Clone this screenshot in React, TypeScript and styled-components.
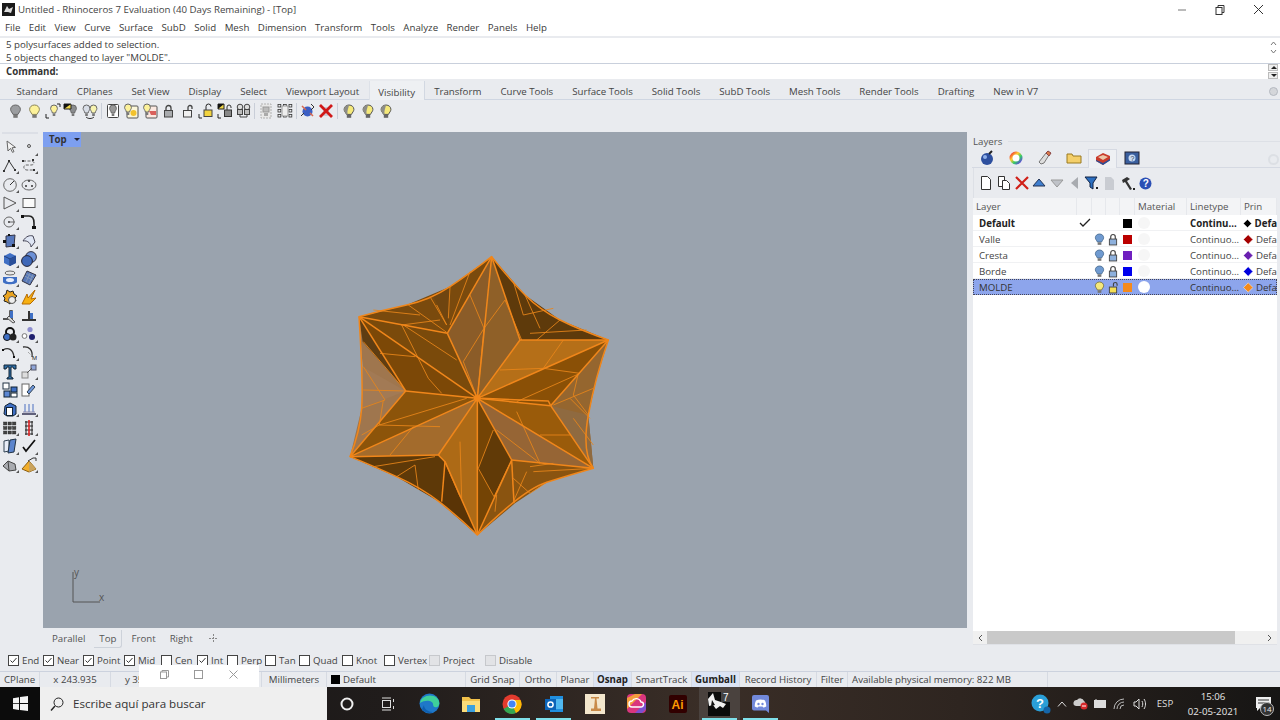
import React from "react";
import styled, { createGlobalStyle } from "styled-components";

const Global = createGlobalStyle`
  html, body { margin: 0; padding: 0; background: #e9ebef; }
  body { font-family: "Open Sans", "Liberation Sans", sans-serif; font-size: 9.7px; color: #333; }
  * { box-sizing: border-box; }
`;

const Page = styled.div`width: 1280px; height: 720px; overflow: hidden; position: relative; display: flex; flex-direction: column; background: #e9ebef;`;
const TitleBar = styled.div`height: 19px; background: #fff; display: flex; align-items: center; padding-left: 2px; flex: none;`;
const TitleText = styled.span`margin-left: 3px; color: #444; white-space: nowrap;`;
const WinButtons = styled.div`margin-left: auto; display: flex; align-items: center; padding-right: 16px; gap: 28px;`;
const MenuBar = styled.div`height: 17px; background: #fff; display: flex; align-items: center; padding-left: 5px; gap: 8.5px; flex: none; color: #3a3a3a;`;
const History = styled.div`height: 26px; margin-top: 2px; background: #fff; display: flex; justify-content: space-between; border-bottom: 1px solid #c9d0dc; flex: none; padding-left: 6px; line-height: 13px; color: #3c3c3c;`;
const HistoryScroll = styled.div`width: 14px; display: flex; flex-direction: column; align-items: center; gap: 3px; color: #666; padding-top: 3px;`;
const CommandLine = styled.div`height: 15px; background: #fff; display: flex; justify-content: space-between; align-items: center; padding-left: 6px; flex: none; font-weight: 700; color: #333;`;
const Spin = styled.div`width: 14px; display: flex; flex-direction: column; gap: 1px; padding: 0 2px;`;
const SpinBtn = styled.div<{ $up?: boolean }>`height: 7px; background: #eee; border: 1px solid #bbb; position: relative;
  &::after { content: ""; position: absolute; left: 2px; top: 1px; border-left: 3px solid transparent; border-right: 3px solid transparent;
    ${p => (p.$up ? "border-bottom: 3px solid #222;" : "border-top: 3px solid #222;")} }`;
const TabBar = styled.div`height: 19px; margin-top: 2px; display: flex; align-items: flex-end; padding-left: 7px; border-bottom: 1px solid #cfd6e2; flex: none; position: relative;`;
const TopTab = styled.div<{ $active?: boolean }>`height: 18px; line-height: 22px; padding: 0 9.5px; white-space: nowrap; color: #444;
  ${p => p.$active ? "background:#eef0f3; border-left:1px solid #dde1e8; border-right:1px solid #d2d8e2; margin-bottom:-1px; height:19px; line-height:24px; padding:0 8.5px;" : ""}`;
const Gear = styled.div`position: absolute; right: 2px; top: 6px; width: 9px; height: 9px; border-radius: 50%; background: #d4d6da; border: 1px solid #b4b8c0;`;
const ToolRow = styled.div`height: 22px; display: flex; align-items: center; padding-left: 6px; flex: none;`;
const ToolSlot = styled.div`width: 18.7px; height: 18px; display: flex; align-items: center; justify-content: center;`;
const ToolSep = styled.div`width: 1px; height: 16px; background: #c9ced8; margin: 0 1.5px;`;
const Middle = styled.div`display: flex; height: 528px; flex: none;`;
const LeftBar = styled.div`width: 43px; padding: 10px 0 0 0; flex: none; display: flex; flex-direction: column;`;
const Handle = styled.div`height: 2px; width: 36px; margin: 0 0 4px 2px; background: #dcdfe6;`;
const LeftGrid = styled.div`display: grid; grid-template-columns: 19px 19px; grid-auto-rows: 18.7px;`;
const Cell = styled.div<{ $flyout?: boolean }>`position: relative; display: flex; align-items: center; justify-content: center;
  ${p => p.$flyout ? `&::after { content:""; position:absolute; right:0; bottom:1px; border-left:3px solid transparent; border-bottom:3px solid #555; }` : ""}`;
const ViewColumn = styled.div`width: 924px; flex: none; display: flex; flex-direction: column; padding-top: 10px;`;
const Viewport = styled.div`position: relative; height: 496px; background: #9aa3ae; flex: none;`;
const ViewLabel = styled.div`position: absolute; left: 0; top: 0; width: 38px; height: 15px; background: #7d9ff0; display: flex; align-items: center; padding-left: 6px; font-weight: 700; color: #333; gap: 7px;`;
const Caret = styled.span`border-left: 3px solid transparent; border-right: 3px solid transparent; border-top: 3px solid #223;`;
const StarWrap = styled.svg`position: absolute; left: 297px; top: 113px; width: 280px; height: 300px;`;
const Axis = styled.svg`position: absolute; left: 20px; top: 430px; width: 50px; height: 48px;`;
const AxisText = styled.span<{ $x: number; $y: number }>`position: absolute; left: ${p => p.$x}px; top: ${p => p.$y}px; color: #555; font-size: 10px;`;
const RightPanel = styled.div`width: 313px; flex: none; display: flex; flex-direction: column; padding: 12px 0 0 6px; position: relative;`;
const PanelTitle = styled.div`display: flex; align-items: center; gap: 6px; height: 14px; color: #555; flex: none; &::after { content: ""; flex: 1; height: 1px; background: #dde0e6; }`;
const PanelTabs = styled.div`height: 20px; flex: none; display: flex; align-items: flex-end; border-bottom: 1px solid #d5d9e2; position: relative; margin-left: -1px;`;
const PanelTab = styled.div<{ $active?: boolean }>`width: 29px; height: 17px; padding-bottom: 1px; display: flex; align-items: center; justify-content: center;
  ${p => p.$active ? "background:#eef0f3; border:1px solid #d5d9e2; border-bottom:none; height:19px; margin-bottom:-1px; padding-bottom:0;" : ""}`;
const PanelGear = styled.div`position: absolute; right: 1px; top: 6px; width: 11px; height: 11px; border-radius: 50%; border: 2px solid #dcdfe4;`;
const LayerTools = styled.div`height: 30px; flex: none; display: flex; align-items: center; padding-left: 4px; gap: 1px; border-left: 1px solid #dde0e6;`;
const LayerTool = styled.div`width: 16.7px; height: 18px; display: flex; align-items: center; justify-content: center;`;
const Table = styled.div`background: #fff; height: 433px; width: 304px; position: relative; flex: none;`;
const Header = styled.div`display: grid; grid-template-columns: 104px 15px 14px 14px 15px 52px 54px 36px; height: 17px; background: #f3f4f6; color: #555; overflow: hidden;`;
const HeadCell = styled.div`padding-left: 3px; line-height: 17px; border-right: 1px solid #e6e8ec; white-space: nowrap; overflow: hidden;`;
const Row = styled.div<{ $sel?: boolean; $bold?: boolean }>`display: grid; grid-template-columns: 104px 15px 14px 14px 15px 52px 54px 36px; height: 16px; align-items: center; overflow: hidden;
  color: #444; box-shadow: inset 0 -1px #f0f1f3;
  ${p => p.$bold ? "font-weight:700; color:#222;" : ""}
  ${p => p.$sel ? "background:#8da5ec; outline:1px dotted #445; outline-offset:-1px; box-shadow:none; color:#333;" : ""}`;
const RCell = styled.div<{ $pad?: number }>`padding-left: ${p => p.$pad ?? 0}px; white-space: nowrap; overflow: hidden; display: flex; align-items: center; justify-content: ${p => p.$pad === undefined ? "center" : "flex-start"};`;
const Swatch = styled.div<{ $c: string }>`width: 9px; height: 9px; background: ${p => p.$c}; flex: none;`;
const Mat = styled.div<{ $c: string }>`width: 12px; height: 12px; border-radius: 50%; background: ${p => p.$c}; margin-left: 1px;`;
const HScroll = styled.div`height: 14px; width: 304px; flex: none; background: #f0f0f0; display: flex; align-items: center; color: #555; border-bottom: 1px solid #dfe1e6;`;
const Arrow = styled.div`width: 14px; flex: none; display: flex; justify-content: center;`;
const Thumb = styled.div`width: 248px; height: 13px; background: #c9c9c9; flex: none;`;
const ThumbRest = styled.div`flex: 1;`;
const ViewTabs = styled.div`height: 22px; display: flex; align-items: center; padding: 0 0 1px 4px; flex: none; color: #555;`;
const ViewTab = styled.div<{ $active?: boolean }>`padding: 0 5px; margin-right: 4px; height: 18px; line-height: 18px;
  ${p => p.$active ? "border-right:1px solid #cdd2da; border-bottom:1px solid #cdd2da; border-radius:0 0 3px 0;" : ""}`;
const AddView = styled.svg`margin-left: 7px;`;
const Osnap = styled.div`height: 22px; display: flex; align-items: center; padding-left: 8px; flex: none; border-bottom: 1px solid #ccd2de; color: #444;`;
const SnapItem = styled.div<{ $w: number }>`width: ${p => p.$w}px; display: flex; align-items: center; gap: 3px; white-space: nowrap; flex: none;`;
const Box = styled.div<{ $dis?: boolean }>`width: 11px; height: 11px; border: 1px solid ${p => p.$dis ? "#c6c8cc" : "#444"}; background: ${p => p.$dis ? "#e2e3e6" : "#fff"}; display: flex; align-items: center; justify-content: center; flex: none;`;
const Status = styled.div`height: 15px; display: flex; align-items: center; flex: none; color: #444; overflow: hidden;`;
const StatCell = styled.div<{ $w: number; $on?: boolean; $center?: boolean }>`width: ${p => p.$w}px; height: 15px; line-height: 15px; flex: none; white-space: nowrap; border-right: 1px solid #d6dae2; padding-left: ${p => p.$center ? 0 : 4}px; text-align: ${p => p.$center ? "center" : "left"};
  ${p => p.$on ? "background:#dce4f4; font-weight:700; color:#222;" : ""}`;
const DefaultCell = styled(StatCell)`display: flex; align-items: center; gap: 3px;`;
const Floating = styled.div`position: absolute; left: 139px; top: 665px; width: 120px; height: 22px; background: #fff; display: flex; align-items: center; justify-content: space-around; padding: 0 8px 4px;`;
const Taskbar = styled.div`height: 33px; flex: none; display: flex; align-items: center; background: linear-gradient(90deg,#141414 0%,#201c1b 30%,#3a2e27 55%,#2e2520 75%,#161514 100%); color: #e8e8e8;`;
const StartBtn = styled.div`width: 40px; height: 33px; display: flex; align-items: center; justify-content: center; background: #0c0c0c;`;
const Search = styled.div`width: 287px; height: 33px; background: #efefef; display: flex; align-items: center; padding-left: 10px; gap: 9px; color: #333; font-size: 11.6px;`;
const TaskApps = styled.div`display: flex; align-items: center; height: 33px; margin-left: -1px;`;
const TaskApp = styled.div<{ $run?: boolean; $active?: boolean }>`width: 41.4px; height: 33px; display: flex; align-items: center; justify-content: center; position: relative;
  ${p => p.$active ? "background:#4a423e;" : ""}
  ${p => p.$run ? `&::after{content:"";position:absolute;left:3px;right:3px;bottom:0;height:2px;background:#7fe0ea;}` : ""}`;
const Tray = styled.div`margin-left: auto; display: flex; align-items: center; height: 33px;`;
const TrayItem = styled.div<{ $w: number }>`width: ${p => p.$w}px; display: flex; align-items: center; justify-content: center; color: #ddd; font-size: 9.7px;`;
const Clock = styled.div`width: 66px; text-align: center; line-height: 15px; font-size: 9.7px; color: #e8e8e8;`;
const Notif = styled.div`width: 34px; display: flex; justify-content: center; position: relative;`;
const NotifBadge = styled.span`position: absolute; right: 6px; top: 5px; width: 14px; height: 14px; border-radius: 50%; border: 1px solid #bbb; background: #333; color: #eee; font-size: 8px; line-height: 12px; text-align: center;`;

const BULB = "M6.5 1C3.6 1 1.6 3 1.6 5.4c0 2 1.6 3 2.4 5h5c.8-2 2.4-3 2.4-5C11.4 3 9.4 1 6.5 1z";
const Bulb = ({ c = "#fff59a", s = "#777", w = 13, h = 15 }: { c?: string; s?: string; w?: number; h?: number }) => (
  <svg width={w} height={h} viewBox="0 0 13 15">
    <path d={BULB} fill={c} stroke={s} />
    <rect x="4.3" y="10.8" width="4.4" height="3" fill="#777" />
  </svg>
);
const HalfBulb = () => (
  <svg width="16" height="15" viewBox="0 0 13 15">
    <path d={BULB} fill="#f5e97a" stroke="#555" />
    <path d="M6.5 1C3.6 1 1.6 3 1.6 5.4c0 2 1.6 3 2.4 5h1.500C4 8 6 4 6.500 1z" fill="#8d8d88" />
    <rect x="4.3" y="10.8" width="4.4" height="3" fill="#666" />
  </svg>
);
const Lock = ({ c = "#eee", open, w = 11, h = 14 }: { c?: string; open?: boolean; w?: number; h?: number }) => (
  <svg width={w} height={h} viewBox="0 0 11 14">
    <path d={open ? "M6 6V3.5a2 2 0 0 1 4 0V5" : "M3 7V4a2.5 2.5 0 0 1 5 0v3"} fill="none" stroke="#444" strokeWidth="1.3" />
    <rect x="1.5" y="6.5" width="8" height="6.5" fill={c} stroke="#444" />
  </svg>
);
const I = ({ children, w = 16, h = 16 }: { children: React.ReactNode; w?: number; h?: number }) => <svg width={w} height={h} viewBox="0 0 16 16">{children}</svg>;
const MiniBulb = ({ x, c, y = 0 }: { x: number; c: string; y?: number }) => <g transform={`translate(0 ${y})`}><path d={`M${x} 2a3.4 3.4 0 0 0-3.4 3.4c0 1.6 1.3 2.4 1.8 4.6h3.2c.5-2.2 1.8-3 1.8-4.6A3.4 3.4 0 0 0 ${x} 2z`} fill={c} stroke="#666" /><rect x={x - 1.3} y="10.5" width="2.6" height="2.5" fill="#777" /></g>;

const topIcons: (React.ReactNode | "sep")[] = [
  <Bulb c="#9b9da0" s="#666" />,
  <Bulb c="#fdf29a" s="#8a8458" />,
  <I><MiniBulb x={9} c="#fdf29a" /><path d="M1 11v4h3M12 1h3v3" fill="none" stroke="#222" /></I>,
  <I><MiniBulb x={10} c="#8a8c8e" /><path d="M1 1h7v5H1z" fill="#f1d84a" stroke="#222" /><path d="M1 1h7L1 6z" fill="#111" /></I>,
  <I><MiniBulb x={4.5} c="#d8dde6" /><MiniBulb x={11.5} c="#f8f4b0" /><path d="M4 14c2 2 6 2 8 0" fill="none" stroke="#333" /></I>,
  "sep",
  <I><rect x="2.5" y="1.5" width="11" height="13" rx="1" fill="#fff" stroke="#444" /><MiniBulb x={8} c="#999" /></I>,
  <I><rect x="4" y="3" width="11" height="12" rx="1" fill="#fbf6d8" stroke="#555" /><MiniBulb x={5} c="#fdf29a" y={-1} /><circle cx="10.5" cy="10" r="3" fill="#f3c22c" /></I>,
  <I><rect x="4" y="3" width="11" height="12" rx="1" fill="#fbe8e0" stroke="#555" /><MiniBulb x={5} c="#fdf29a" y={-1} /><path d="M7 8h7v4H9z" fill="#d9605c" /></I>,
  <Lock c="#a9abae" />,
  <Lock c="#f0f0f0" open />,
  <I><path d="M8 7V3.5a2.5 2.5 0 0 1 5 0" fill="none" stroke="#222" /><rect x="6" y="7" width="8" height="6.5" fill="#f2d33f" stroke="#444" /><path d="M1 11v4h3" fill="none" stroke="#222" /></I>,
  <I><path d="M1 1h6v5H1z" fill="#f1d84a" stroke="#222" /><path d="M1 1h6L1 6z" fill="#111" /><path d="M10 7V4a2 2 0 0 1 4 0v1" fill="none" stroke="#333" /><rect x="7.5" y="7" width="7" height="6.5" fill="#888" stroke="#333" /><path d="M1 11v4h3" fill="none" stroke="#222" /></I>,
  <I><g transform="translate(-.5 0)"><circle cx="4.5" cy="4" r="2.8" fill="#ddd" stroke="#444" /><rect x="2" y="6.5" width="5" height="5" fill="#bbb" stroke="#444" /><circle cx="11.5" cy="4" r="2.8" fill="#ddd" stroke="#444" /><rect x="9" y="6.5" width="5" height="5" fill="#bbb" stroke="#444" /><path d="M4.5 12v2h7v-2" fill="none" stroke="#444" /></g></I>,
  "sep",
  <I><rect x="3" y="1" width="10" height="14" fill="#e8e8e8" stroke="#b0b0b0" strokeDasharray="2 1" /><rect x="5" y="4" width="6" height="5" fill="#bbb" stroke="#999" /><rect x="6" y="10" width="4" height="3" fill="#aaa" /></I>,
  <I><g fill="#333">{[1.5, 6.5, 11.5].flatMap(y => [1, 6.5, 12].map(x => <rect key={x + "-" + y} x={x} y={y} width="2.8" height="2.5" fill="none" stroke="#333" strokeWidth=".8" />))}</g><rect x="5" y="3" width="6" height="10" fill="#eee" stroke="#999" /></I>,
  "sep",
  <I><circle cx="7.5" cy="8.5" r="5" fill="#3c5fc4" /><path d="M2 3l4 4M13 13l-3-3" stroke="#d8684f" strokeWidth="1.5" /><path d="M11 1l3 3-3 3" fill="none" stroke="#333" /><path d="M1 13l3-3" stroke="#333" /></I>,
  <I><rect x="5" y="4" width="6" height="9" rx="2" fill="#c8ccd8" /><path d="M2 2l12 12M14 2L2 14" stroke="#d01818" strokeWidth="2.8" /></I>,
  "sep",
  <HalfBulb />,
  <HalfBulb />,
  <HalfBulb />,
];

const p = { dot: "#333" };
const leftIcons: { n: React.ReactNode; f?: boolean }[] = [
  { n: <I><path d="M5 2l1 10 2.5-2.6 2 4 1.5-.8-2-3.8 3.500-.4z" fill="#f4f4f4" stroke="#666" /></I> },
  { n: <I><circle cx="8" cy="7" r="1.500" fill="#ddd" stroke="#555" /></I>, f: true },
  { n: <I><path d="M2 13L7 3l6 9" fill="none" stroke="#333" /><g fill={p.dot}><rect x="1" y="12" width="2" height="2" /><rect x="6" y="2" width="2" height="2" /><rect x="12" y="11" width="2" height="2" /></g></I>, f: true },
  { n: <I><path d="M2 3h8c4 0 4 4 0 4H5c-3 0-3 5 1 5h8" fill="none" stroke="#666" strokeDasharray="3 1.5" /><g fill={p.dot}><rect x="1" y="2" width="2" height="2" /><rect x="11" y="1" width="2" height="2" /><rect x="12" y="11" width="2" height="2" /></g></I>, f: true },
  { n: <I><circle cx="8" cy="8" r="6.3" fill="none" stroke="#666" /><path d="M8 8l4-4" stroke="#333" /></I>, f: true },
  { n: <I><ellipse cx="8" cy="8" rx="7" ry="5" fill="none" stroke="#666" /><circle cx="8" cy="4" r="1" fill="#333" /><circle cx="5" cy="9" r="1" fill="#333" /><circle cx="11" cy="9" r="1" fill="#333" /></I> },
  { n: <I><path d="M2 2l12 6-12 6z" fill="none" stroke="#555" /></I>, f: true },
  { n: <I><rect x="2" y="3.5" width="12" height="9" fill="#fafafa" stroke="#555" /></I> },
  { n: <I><circle cx="7" cy="8" r="5" fill="none" stroke="#666" /><circle cx="7" cy="8" r="1" fill="#333" /><path d="M7 8h6" stroke="#666" /></I>, f: true },
  { n: <I><path d="M1 2h7c4 0 5 3 5 7v4" fill="none" stroke="#222" strokeWidth="1.6" /><rect x="0" y="1" width="3" height="3" fill="#111" /><rect x="11" y="12" width="4" height="3" fill="#111" /></I> },
  { n: <I><path d="M4 3l9-1-1 11-8 1z" fill="#5778bb" stroke="#334" /><g fill="#111"><rect x="1" y="7" width="3" height="3" /><rect x="6" y="1" width="2" height="2" /><rect x="10" y="11" width="3" height="3" /></g></I>, f: true },
  { n: <I><path d="M2 8c3-5 7-6 10-5l2 6-4 5c0-3-3-7-8-6z" fill="#dfe6f4" stroke="#445" /></I>, f: true },
  { n: <I><path d="M8 2l6 3v7l-6 3-6-3V5z" fill="#3f6fc4" /><path d="M2 5l6 3 6-3M8 8v7" stroke="#213f7c" fill="none" /><path d="M8 8l6-3v7l-6 3z" fill="#2a4f99" /></I>, f: true },
  { n: <I><circle cx="10" cy="6" r="5.4" fill="#6c90d6" stroke="#334" /><circle cx="6" cy="10" r="5.4" fill="#3f68b8" stroke="#223" /></I>, f: true },
  { n: <I><ellipse cx="8" cy="3" rx="5" ry="2" fill="#e8e8e8" stroke="#666" /><path d="M1 7h14v5c-1 3-13 3-14 0z" fill="#3f6fc4" /><ellipse cx="8" cy="10" rx="4" ry="2" fill="#e8eefc" /></I>, f: true },
  { n: <I><path d="M6 1l9 4-6 10-8-4z" fill="#5878b8" stroke="#334" /><path d="M3.5 6l8 4M5 3.5l8 4M9 3L5 12M12 4l-4 10" stroke="#9ab" strokeWidth=".6" /></I>, f: true },
  { n: <I><path d="M5 1l3 2 3-1 1 3 3 2-2 2 1 3-4 0-2 3-3-2-3-1 1-3-2-2 3-2z" fill="#e9a321" stroke="#222" /><circle cx="10" cy="11" r="3.5" fill="#eee" stroke="#555" /></I> },
  { n: <I><path d="M1 15L6 5l1 4 7-8-4 9 5-1-6 6z" fill="#f7b012" stroke="#b56a00" /></I> },
  { n: <I><path d="M1 11h7V3h2v8" fill="none" stroke="#222" strokeWidth="1.4" /><path d="M7 8l6 6-2 1-6-5z" fill="#d8d8d8" stroke="#555" /><rect x="8" y="3" width="3" height="7" fill="#3f6fc4" /></I> },
  { n: <I><path d="M1 13h14v-2H9V3H7v8H1z" fill="#333" /><path d="M9 5h3v6H9z" fill="#3f6fc4" /></I> },
  { n: <I><circle cx="8" cy="6" r="4" fill="none" stroke="#111" strokeWidth="2" /><circle cx="5" cy="11" r="3.5" fill="#3f6fc4" stroke="#111" /><circle cx="11" cy="11" r="3.5" fill="#222" /></I>, f: true },
  { n: <I><circle cx="9" cy="3.5" r="2.6" fill="#8f8fd0" /><circle cx="3.5" cy="10" r="2.4" fill="#fff" stroke="#777" /><circle cx="11" cy="11" r="3" fill="#20206e" /></I>, f: true },
  { n: <I><path d="M1 5c5-3 10-1 11 7" fill="none" stroke="#333" strokeWidth="1.3" /><rect x="0" y="4" width="2" height="2" fill="#111" /><rect x="11" y="11" width="2" height="2" fill="#111" /></I>, f: true },
  { n: <I><path d="M2 2c6-1 10 3 9 10" fill="none" stroke="#333" strokeWidth="1.3" /><path d="M7 7l3 3" stroke="#888" strokeDasharray="1 1" /><text x="11" y="15" fontSize="6" fontFamily="Liberation Sans" fill="#222">M</text></I> },
  { n: <I><path d="M2 1h12v4h-2l-1-2H9v10l2 1v1H5v-1l2-1V3H5L4 5H2z" fill="#2f6fa8" stroke="#123" /></I> },
  { n: <I><rect x="1" y="8" width="6" height="6" fill="#ddd" stroke="#888" /><rect x="10" y="1" width="5" height="5" fill="#8fa5d8" stroke="#556" /><path d="M6 9l5-5" stroke="#555" /></I>, f: true },
  { n: <I><rect x="1" y="1" width="6" height="6" fill="#fff" stroke="#234" /><rect x="9" y="5" width="6" height="5" fill="#3f6fc4" stroke="#123" /><rect x="2" y="9" width="6" height="6" fill="#5b86d2" stroke="#123" /><rect x="9" y="11" width="6" height="4" fill="#fff" stroke="#123" /></I> },
  { n: <I><rect x="1" y="2" width="7" height="12" fill="#fff" stroke="#666" /><path d="M8 12l6-7-2-2-6 7z" fill="#6f97dc" stroke="#345" /></I> },
  { n: <I><path d="M3 5l5-3 6 3v8l-3 2H5l-3-2z" fill="#3f6fc4" stroke="#123" /><rect x="4.5" y="6.5" width="6" height="8" fill="#fff" stroke="#123" /></I>, f: true },
  { n: <I><path d="M1 13h14" stroke="#335" strokeWidth="1.5" /><path d="M4 3v8M8 3v8M12 3v8" stroke="#4a6fc0" /><path d="M2 11h12" stroke="#88a" /></I>, f: true },
  { n: <I><g fill="#444">{[2, 6.5, 11].flatMap(y => [1.5, 6, 10.5].map(x => <rect key={x + "_" + y} x={x} y={y} width="3.4" height="3" stroke="#222" strokeWidth=".4" />))}</g></I>, f: true },
  { n: <I><g stroke="#222" fill="none"><path d="M4 2h8M4 6h8M4 10h8M4 14h8M5 1v14M11 1v14" /></g><path d="M8 0v16" stroke="#d22" strokeWidth="1.6" /></I>, f: true },
  { n: <I><path d="M2 3l5-1v11l-5 1z" fill="#e8edf7" stroke="#345" /><path d="M8 2l6-1-2 13-6 1z" fill="#5c85cd" stroke="#234" /></I>, f: true },
  { n: <I><path d="M2 9l3 4 9-11" fill="none" stroke="#111" strokeWidth="1.7" /></I>, f: true },
  { n: <I><path d="M1 9l5-5 7 3 1 6-7 1z" fill="#a9abb0" stroke="#444" /><path d="M6 4l1 10" stroke="#444" /></I>, f: true },
  { n: <I><path d="M8 4L1 12l7 3 7-3z" fill="#f2ae2a" stroke="#8b5d10" /><path d="M8 4l7 8-7 3z" fill="#c9a35e" /><path d="M7 4l5-3h3v3" fill="none" stroke="#333" /></I>, f: true },
];

const Star = () => {
  const C = "412,460";
  const faces: [string, string][] = [
    [`${C} 322,265 455,35`, "#8b5c28"], [`${C} 455,35 540,285`, "#8f6028"],
    [`${C} 540,285 805,285`, "#b56f18"], [`${C} 805,285 632,482`, "#8a5006"],
    [`${C} 632,482 760,670`, "#9a5b0a"], [`${C} 760,670 515,645`, "#966535"],
    [`${C} 515,645 412,870`, "#744405"], [`${C} 412,870 315,650 295,630`, "#ad6a16"],
    [`${C} 295,630 30,635`, "#a36b2c"], [`${C} 30,635 197,438`, "#8c540a"],
    [`${C} 197,438 57,215`, "#7c4807"], [`${C} 57,215 322,265`, "#7a4a0b"],
    [`455,35 520,110 555,150 660,225 805,285 540,285`, "#5e3a0b"],
    [`805,285 770,400 745,510 760,670 632,482`, "#95662f"],
    [`760,670 620,712 525,775 412,870 515,645`, "#8a5410"],
    [`412,870 300,772 170,695 30,635 295,630 315,650`, "#5e3908"],
    [`30,635 65,490 68,365 57,215 197,438`, "#9f764e"],
    [`57,215 200,180 330,125 455,35 322,265`, "#7a4a0d"],
    [`57,215 197,438 68,290`, "#5f3d12"],
    [`68,365 197,438 65,490`, "#a27a55"],
    [`415,670 460,555 515,645 462,755`, "#613a07"],
    [`632,482 745,510 760,670`, "#8f6a40"],
    [`300,772 315,650 360,755 412,870`, "#5a3406"],
    [`720,385 805,285 632,482`, "#a5691d"],
    [`280,155 330,125 325,240`, "#6f4510"],
  ];
  const thick = ["412,460 322,265", "412,460 455,35", "412,460 540,285", "412,460 805,285", "412,460 632,482", "412,460 760,670", "412,460 515,645", "412,460 412,870", "412,460 295,630", "412,460 30,635", "412,460 197,438", "412,460 57,215",
    "322,265 455,35", "455,35 540,285", "540,285 805,285", "805,285 632,482", "632,482 760,670", "760,670 515,645", "515,645 412,870", "412,870 315,650 295,630", "295,630 30,635", "30,635 197,438", "197,438 57,215", "57,215 322,265",
    "425,460 625,468 632,482", "515,645 522,775", "315,650 305,770"];
  const thin = ["390,150 432,250 370,350 412,460", "495,165 432,250 412,460", "330,240 390,80", "330,125 325,220", "270,155 320,240 290,180", "205,180 320,262", "185,240 300,225", "100,195 240,210", "185,240 265,400 305,445", "70,290 197,438", "70,365 135,465 65,490", "70,435 197,438", "120,325 225,335", "190,240 350,345",
    "130,465 118,540 65,570", "118,540 300,545", "118,540 380,460", "220,545 150,630", "100,665 285,635", "170,695 225,660", "225,660 235,735", "360,755 315,650", "360,590 365,760", "415,670 462,755", "415,670 460,555", "462,755 515,645", "465,800 470,750", "520,770 560,680", "520,700 570,745 620,712", "580,680 760,670", "570,665 640,655", "470,555 600,655", "530,500 600,655", "600,570 690,570", "720,385 610,370 480,375", "670,285 610,370", "720,385 530,470", "760,430 640,480", "715,385 700,450 745,510", "690,460 750,520", "700,520 760,600", "555,150 600,250", "550,210 640,190", "520,110 550,210", "495,165 545,285", "660,225 590,285", "740,255 570,265"];
  return (
    <StarWrap viewBox="0 0 840 900">
      {faces.map(([pts, fill]) => <polygon key={pts} points={pts} fill={fill} />)}
      <g fill="none" stroke="#e8851a" strokeWidth="2.6">{thin.map(t => <polyline key={t} points={t} />)}</g>
      <g fill="none" stroke="#f0861a" strokeWidth="4.5" strokeLinejoin="round">
        {thick.map(t => <polyline key={t} points={t} />)}
        <path d="M455 35Q510 105 555 150T660 225 805 285Q765 400 745 510T760 670Q690 690 620 712T412 870Q355 815 300 772T170 695 30 635Q60 560 65 490T57 215Q130 195 200 180T330 125 455 35z" />
      </g>
      <circle cx="412" cy="460" r="10" fill="#f0861a" />
    </StarWrap>
  );
};

const Mini = () => <svg width="9" height="9" viewBox="0 0 9 9"><path d="M1.5 4.5l2 2 4-4.5" fill="none" stroke="#333" /></svg>;
const Diamond = ({ c }: { c: string }) => <svg width="11" height="11" viewBox="0 0 11 11"><path d="M5.5 0.5l5 5-5 5-5-5z" fill={c} stroke="#fff" strokeWidth=".5" /></svg>;

const topTabs = ["Standard", "CPlanes", "Set View", "Display", "Select", "Viewport Layout", "Visibility", "Transform", "Curve Tools", "Surface Tools", "Solid Tools", "SubD Tools", "Mesh Tools", "Render Tools", "Drafting", "New in V7"];
const menus = ["File", "Edit", "View", "Curve", "Surface", "SubD", "Solid", "Mesh", "Dimension", "Transform", "Tools", "Analyze", "Render", "Panels", "Help"];
const snaps: [string, number, boolean, boolean?][] = [["End", 35, true], ["Near", 40, true], ["Point", 41, true], ["Mid", 37, true], ["Cen", 36, false], ["Int", 30, true], ["Perp", 38, false], ["Tan", 34, false], ["Quad", 43, false], ["Knot", 42, false], ["Vertex", 45, false], ["Project", 56, false, true], ["Disable", 50, false, true]];
const rows = [
  { name: "Default", bold: true, c: "#000", d: "#000", check: true, lt: "Continu...", pr: "Defa" },
  { name: "Valle", c: "#bb0000", d: "#a50000", lt: "Continuo...", pr: "Defa" },
  { name: "Cresta", c: "#7020c0", d: "#6a20b0", lt: "Continuo...", pr: "Defa" },
  { name: "Borde", c: "#0000ee", d: "#0000dd", lt: "Continuo...", pr: "Defa" },
];

export default function App() {
  return (
    <Page>
      <Global />
      <TitleBar>
        <svg width="13" height="13" viewBox="0 0 13 13"><rect width="13" height="13" fill="#1a1a1a" /><path d="M2 9l3-6 2 3 4-2-2 6-3-1z" fill="#ddd" /></svg>
        <TitleText>Untitled - Rhinoceros 7 Evaluation (40 Days Remaining) - [Top]</TitleText>
        <WinButtons>
          <svg width="10" height="10" viewBox="0 0 10 10"><path d="M1 5h8" stroke="#777" /></svg>
          <svg width="10" height="10" viewBox="0 0 10 10"><rect x="1" y="2.5" width="6" height="7" fill="none" stroke="#333" /><path d="M3 2.5V.5h6v7H7" fill="none" stroke="#333" /></svg>
          <svg width="11" height="11" viewBox="0 0 11 11"><path d="M1 1l9 9M10 1l-9 9" stroke="#333" /></svg>
        </WinButtons>
      </TitleBar>
      <MenuBar>{menus.map(m => <span key={m}>{m}</span>)}</MenuBar>
      <History>
        <div>5 polysurfaces added to selection.<br />5 objects changed to layer "MOLDE".</div>
        <HistoryScroll>
          <svg width="7" height="5" viewBox="0 0 7 5"><path d="M1 4l2.5-3L6 4" fill="none" stroke="#777" /></svg>
          <svg width="7" height="5" viewBox="0 0 7 5"><path d="M1 1l2.5 3L6 1" fill="none" stroke="#777" /></svg>
        </HistoryScroll>
      </History>
      <CommandLine>
        <span>Command:</span>
        <Spin><SpinBtn $up /><SpinBtn /></Spin>
      </CommandLine>
      <TabBar>
        {topTabs.map(t => <TopTab key={t} $active={t === "Visibility"}>{t}</TopTab>)}
        <Gear />
      </TabBar>
      <ToolRow>
        {topIcons.map((n, i) => n === "sep" ? <ToolSep key={i} /> : <ToolSlot key={i}>{n}</ToolSlot>)}
      </ToolRow>
      <Middle>
        <LeftBar>
          <Handle />
          <LeftGrid>{leftIcons.map((c, i) => <Cell key={i} $flyout={c.f}>{c.n}</Cell>)}</LeftGrid>
        </LeftBar>
        <ViewColumn>
          <Viewport>
            <ViewLabel>Top<Caret /></ViewLabel>
            <Star />
            <Axis viewBox="0 0 50 48"><path d="M10 10v30h27" fill="none" stroke="#555" /></Axis>
            <AxisText $x={31} $y={433}>y</AxisText>
            <AxisText $x={56} $y={458}>x</AxisText>
          </Viewport>
          <ViewTabs>
            <ViewTab>Parallel</ViewTab>
            <ViewTab $active>Top</ViewTab>
            <ViewTab>Front</ViewTab>
            <ViewTab>Right</ViewTab>
            <AddView width="9" height="9" viewBox="0 0 9 9"><path d="M4.5 0v9M0 4.5h9" stroke="#888" strokeDasharray="2 1" /></AddView>
          </ViewTabs>
        </ViewColumn>
        <RightPanel>
          <PanelTitle>Layers</PanelTitle>
          <PanelTabs>
            <PanelTab><I><circle cx="8" cy="9" r="6" fill="#2d4f9e" /><circle cx="6" cy="7" r="2" fill="#8fb0ea" /><path d="M10 4l3-3" stroke="#222" strokeWidth="2" /></I></PanelTab>
            <PanelTab><svg width="14" height="14" viewBox="0 0 14 14"><defs><linearGradient id="rb" x1="0" y1="0" x2="1" y2="1"><stop offset="0" stopColor="#e33" /><stop offset=".35" stopColor="#fc3" /><stop offset=".65" stopColor="#3c6" /><stop offset="1" stopColor="#63e" /></linearGradient></defs><circle cx="7" cy="7" r="5" fill="#fff" stroke="url(#rb)" strokeWidth="3" /></svg></PanelTab>
            <PanelTab><I><path d="M4 14l-2-2 7-9 3 2-5 8z" fill="#ddd" stroke="#777" /><path d="M9 3l2-2 3 2-2 3z" fill="#d97a4a" stroke="#844" /></I></PanelTab>
            <PanelTab><I><path d="M1 4h5l1 2h8v7H1z" fill="#f4cf6a" stroke="#9a7a20" /></I></PanelTab>
            <PanelTab $active><I><path d="M1 6l7-4 7 3v4l-7 5-7-4z" fill="#c93b2b" /><path d="M1 9l7 3 7-4v1.5l-7 4.5-7-4z" fill="#2a4f99" /><path d="M3 6l5-2 5 2-5 3z" fill="#ecc7a8" /></I></PanelTab>
            <PanelTab><I><rect x="1" y="2" width="14" height="12" fill="#3a5f9e" stroke="#223" /><circle cx="8" cy="8" r="3.5" fill="#c9dbf4" /><text x="6.4" y="10.5" fontSize="7" fill="#234" fontFamily="Liberation Sans">?</text></I></PanelTab>
            <PanelGear />
          </PanelTabs>
          <LayerTools>
            <LayerTool><I><path d="M3.5 1.5h6l3 3v10h-9z" fill="#fff" stroke="#333" /></I></LayerTool>
            <LayerTool><I><path d="M2.5 1.5h6v10h-6z" fill="#fff" stroke="#333" /><path d="M6.5 5.5h4l3 3v6h-7z" fill="#fff" stroke="#333" /></I></LayerTool>
            <LayerTool><I><path d="M2 2l12 12M14 2L2 14" stroke="#d02018" strokeWidth="2.2" /></I></LayerTool>
            <LayerTool><I><path d="M8 4l6 7H2z" fill="#3f7fd0" stroke="#235" /></I></LayerTool>
            <LayerTool><I><path d="M2 5h12l-6 7z" fill="#bfc2c8" stroke="#999" /></I></LayerTool>
            <LayerTool><I><path d="M11 2v12L4 8z" fill="#a8abb0" /></I></LayerTool>
            <LayerTool><I><path d="M1 2h12L9 8v6L6 12V8z" fill="#2c6fc0" stroke="#124" /><rect x="12" y="12" width="2" height="2" fill="#222" /></I></LayerTool>
            <LayerTool><I><path d="M3 2h6l3 3v10H3z" fill="#c9ccd2" /></I></LayerTool>
            <LayerTool><I><path d="M2 5l5-3 3 2-3 2 5 8-2 1-5-8-2 1z" fill="#333" /><rect x="13" y="13" width="2" height="2" fill="#222" /></I></LayerTool>
            <LayerTool><svg width="13" height="13" viewBox="0 0 13 13"><circle cx="6.5" cy="6.5" r="6" fill="#2b4fb5" /><text x="3.7" y="10.4" fontSize="10" fontWeight="700" fill="#fff" fontFamily="Liberation Sans">?</text></svg></LayerTool>
          </LayerTools>
          <Table>
            <Header>
              <HeadCell>Layer</HeadCell><HeadCell /><HeadCell /><HeadCell /><HeadCell />
              <HeadCell>Material</HeadCell><HeadCell>Linetype</HeadCell><HeadCell>Prin</HeadCell>
            </Header>
            {rows.map(r => (
              <Row key={r.name} $bold={r.bold}>
                <RCell $pad={6}>{r.name}</RCell>
                <RCell>{r.check ? <svg width="12" height="10" viewBox="0 0 12 10"><path d="M1 5l3 3 7-7" fill="none" stroke="#222" strokeWidth="1.3" /></svg> : null}</RCell>
                <RCell>{r.check ? null : <Bulb c="#6f9ad0" s="#46698f" w={11} h={13} />}</RCell>
                <RCell>{r.check ? null : <Lock c="#8db0dc" w={10} h={13} />}</RCell>
                <RCell><Swatch $c={r.c} /></RCell>
                <RCell $pad={2}><Mat $c="#f6f6f6" /></RCell>
                <RCell $pad={3}>{r.lt}</RCell>
                <RCell $pad={2}><Diamond c={r.d} />&nbsp;{r.pr}</RCell>
              </Row>
            ))}
            <Row $sel>
              <RCell $pad={6}>MOLDE</RCell>
              <RCell />
              <RCell><Bulb c="#f5e87c" s="#76703a" w={11} h={13} /></RCell>
              <RCell><Lock c="#f4de55" open w={10} h={13} /></RCell>
              <RCell><Swatch $c="#f58a1c" /></RCell>
              <RCell $pad={2}><Mat $c="#fff" /></RCell>
              <RCell $pad={3}>Continuo...</RCell>
              <RCell $pad={2}><Diamond c="#f58a1c" />&nbsp;Defa</RCell>
            </Row>
          </Table>
          <HScroll>
            <Arrow><svg width="6" height="8" viewBox="0 0 6 8"><path d="M5 1L2 4l3 3" fill="none" stroke="#555" /></svg></Arrow>
            <Thumb />
            <ThumbRest />
            <Arrow><svg width="6" height="8" viewBox="0 0 6 8"><path d="M1 1l3 3-3 3" fill="none" stroke="#555" /></svg></Arrow>
          </HScroll>
        </RightPanel>
      </Middle>
      <Osnap>
        {snaps.map(([t, w, on, dis]) => (
          <SnapItem key={t} $w={w}><Box $dis={dis}>{on ? <Mini /> : null}</Box>{t}</SnapItem>
        ))}
      </Osnap>
      <Status>
        <StatCell $w={40}>CPlane</StatCell>
        <StatCell $w={71} $center>x 243.935</StatCell>
        <StatCell $w={72} $center>y 354.163</StatCell>
        <StatCell $w={79} $center>z 0.000</StatCell>
        <StatCell $w={65} $center>Millimeters</StatCell>
        <DefaultCell $w={139}><Swatch $c="#000" />Default</DefaultCell>
        <StatCell $w={54} $center>Grid Snap</StatCell>
        <StatCell $w={37} $center>Ortho</StatCell>
        <StatCell $w={37} $center>Planar</StatCell>
        <StatCell $w={38} $center $on>Osnap</StatCell>
        <StatCell $w={60} $center>SmartTrack</StatCell>
        <StatCell $w={48} $center $on>Gumball</StatCell>
        <StatCell $w={77} $center>Record History</StatCell>
        <StatCell $w={31} $center>Filter</StatCell>
        <StatCell $w={200}>Available physical memory: 822 MB</StatCell>
      </Status>
      <Floating>
        <svg width="9" height="9" viewBox="0 0 9 9"><rect x=".5" y="2" width="6" height="6.5" fill="none" stroke="#999" /><path d="M2 2V.5h6.500V7H6.500" fill="none" stroke="#999" /></svg>
        <svg width="9" height="9" viewBox="0 0 9 9"><rect x=".5" y=".5" width="8" height="8" fill="none" stroke="#999" /></svg>
        <svg width="9" height="9" viewBox="0 0 9 9"><path d="M.5.5l8 8M8.5.5l-8 8" stroke="#999" /></svg>
      </Floating>
      <Taskbar>
        <StartBtn><svg width="15" height="15" viewBox="0 0 15 15" fill="#f4f4f4"><path d="M0 2.2l6-1v6H0zM7 1l8-1v7H7zM0 8h6v6l-6-1zM7 8h8v7l-8-1z" /></svg></StartBtn>
        <Search>
          <svg width="14" height="14" viewBox="0 0 14 14"><circle cx="8.5" cy="5.5" r="4.5" fill="none" stroke="#222" /><path d="M5 9l-4 4.5" stroke="#222" strokeWidth="1.4" /></svg>
          Escribe aquí para buscar
        </Search>
        <TaskApps>
          <TaskApp><svg width="14" height="14" viewBox="0 0 14 14"><circle cx="7" cy="7" r="5.5" fill="none" stroke="#eee" strokeWidth="2" /></svg></TaskApp>
          <TaskApp><svg width="14" height="14" viewBox="0 0 14 14"><path d="M1 1h9M1 13h9" stroke="#ddd" /><rect x="1.5" y="3.5" width="8" height="7" fill="none" stroke="#ddd" /><path d="M12.5 2v3M12.5 9v3" stroke="#ddd" /></svg></TaskApp>
          <TaskApp><svg width="21" height="21" viewBox="0 0 21 21"><circle cx="10.5" cy="10.5" r="10" fill="#1f78c8" /><path d="M1 10C2 3 12 0 18 5c3 3 3 8 0 9-3 1-4-1-4-3 0-3-7-5-13-1z" fill="#3fcf9a" /><path d="M5 12c0 4 4 7 9 7-3 2-9 1-11-3z" fill="#0f5fb0" /></svg></TaskApp>
          <TaskApp><svg width="20" height="18" viewBox="0 0 20 18"><path d="M1 2h7l2 2h9v13H1z" fill="#f2c14a" /><rect x="1" y="6" width="18" height="11" fill="#fbdc7a" /><rect x="6" y="10" width="8" height="7" fill="#3aa0e0" /></svg></TaskApp>
          <TaskApp $run><svg width="20" height="20" viewBox="0 0 20 20"><circle cx="10" cy="10" r="9.5" fill="#e33b2e" /><path d="M10 10L1.5 15A9.5 9.5 0 0 0 14 19z" fill="#34a853" /><path d="M10 10l4 9A9.5 9.5 0 0 0 18.5 6H10z" fill="#fbbc05" /><circle cx="10" cy="10" r="4.6" fill="#fff" /><circle cx="10" cy="10" r="3.6" fill="#4285f4" /></svg></TaskApp>
          <TaskApp $run><svg width="20" height="20" viewBox="0 0 20 20"><rect x="6" y="2" width="13" height="16" fill="#1f8fe0" /><rect x="10" y="5" width="9" height="10" fill="#50b8f0" /><rect x="1" y="5" width="11" height="11" fill="#0c64b8" /><circle cx="6.5" cy="10.5" r="2.6" fill="none" stroke="#fff" strokeWidth="1.5" /></svg></TaskApp>
          <TaskApp><svg width="20" height="20" viewBox="0 0 20 20"><rect width="20" height="20" fill="#f3e6cc" /><path d="M6 3h8v1.5h-2.500l1 10H16V17H6v-2.5h3l1-10H6z" fill="#c98a48" /></svg></TaskApp>
          <TaskApp><svg width="19" height="19" viewBox="0 0 19 19"><rect width="19" height="19" rx="4" fill="#d9367e" /><path d="M0 4l8-4h7L0 15z" fill="#f39c3d" /><path d="M19 8v7l-4 4H8z" fill="#7c4fd0" /><path d="M5 13a3 3 0 0 1 0-6 5 5 0 0 1 9 1 2.5 2.5 0 0 1 0 5z" fill="none" stroke="#fff" strokeWidth="1.4" /></svg></TaskApp>
          <TaskApp><svg width="18" height="18" viewBox="0 0 18 18"><rect width="18" height="18" rx="2" fill="#310000" /><text x="2.5" y="13.5" fontSize="12" fontWeight="700" fill="#ff9a00" fontFamily="Liberation Sans">Ai</text></svg></TaskApp>
          <TaskApp $run $active><svg width="22" height="24" viewBox="0 0 22 24"><rect width="22" height="24" fill="#0b0b0b" /><path d="M0 7l5-6 2 7 6 2 5 2-3 4-3-2-4 3-3-4-4 1z" fill="#f0f0f0" /><path d="M4 8l3 5-4 1z" fill="#111" /><rect x="13" y="0" width="9" height="10" fill="#444" /><text x="15" y="9" fontSize="10" fill="#fff" fontFamily="Liberation Sans">7</text></svg></TaskApp>
          <TaskApp $run><svg width="17" height="18" viewBox="0 0 17 18"><path d="M2 0h13a2 2 0 0 1 2 2v16l-3-2.500H2a2 2 0 0 1-2-2V2a2 2 0 0 1 2-2z" fill="#7289da" /><path d="M4 5.500c3-1.400 6-1.400 9 0 1 2 1.400 4 1.200 6-1 .7-2 1-3 1l-.7-1H6.500l-.7 1c-1 0-2-.3-3-1-.2-2 .2-4 1.200-6z" fill="#fff" /><circle cx="6.5" cy="9" r="1.2" fill="#7289da" /><circle cx="10.5" cy="9" r="1.2" fill="#7289da" /></svg></TaskApp>
        </TaskApps>
        <Tray>
          <TrayItem $w={26}><svg width="20" height="20" viewBox="0 0 20 20"><circle cx="9" cy="9" r="8.5" fill="#2a9fd8" /><text x="5" y="14" fontSize="13" fontWeight="700" fill="#fff" fontFamily="Liberation Sans">?</text><circle cx="16" cy="16" r="3.5" fill="#1565a8" /></svg></TrayItem>
          <TrayItem $w={16}><svg width="10" height="6" viewBox="0 0 10 6"><path d="M1 5.5L5 1l4 4.5" fill="none" stroke="#ddd" /></svg></TrayItem>
          <TrayItem $w={20}><svg width="15" height="13" viewBox="0 0 15 13"><path d="M3 9a3 3 0 0 1 1-6 4 4 0 0 1 7 1 3 3 0 0 1 0 5z" fill="#ccc" /><circle cx="11" cy="9" r="3.5" fill="#d5282b" /><path d="M9 9h4" stroke="#fff" /></svg></TrayItem>
          <TrayItem $w={20}><svg width="14" height="10" viewBox="0 0 14 10"><rect x="1" y="1" width="12" height="8" fill="#ddd" /><path d="M3 0v2" stroke="#ddd" /></svg></TrayItem>
          <TrayItem $w={20}><svg width="14" height="12" viewBox="0 0 14 12"><path d="M1 11A10 10 0 0 1 11 1M4 11a7 7 0 0 1 7-7M7 11a4 4 0 0 1 4-4" fill="none" stroke="#bbb" /></svg></TrayItem>
          <TrayItem $w={20}><svg width="14" height="12" viewBox="0 0 14 12"><path d="M1 4h2l3-3v10L3 8H1zM9 3c1 2 1 4 0 6M11 1c2 3 2 7 0 10" fill="none" stroke="#ddd" /></svg></TrayItem>
          <TrayItem $w={30}>ESP</TrayItem>
          <Clock>15:06<br />02-05-2021</Clock>
          <Notif>
            <svg width="15" height="14" viewBox="0 0 15 14"><path d="M0 0h15v11H4l-3 3v-3H0z" fill="#eee" /><path d="M2 3h11M2 6h11" stroke="#333" /></svg>
            <NotifBadge>14</NotifBadge>
          </Notif>
        </Tray>
      </Taskbar>
    </Page>
  );
}
